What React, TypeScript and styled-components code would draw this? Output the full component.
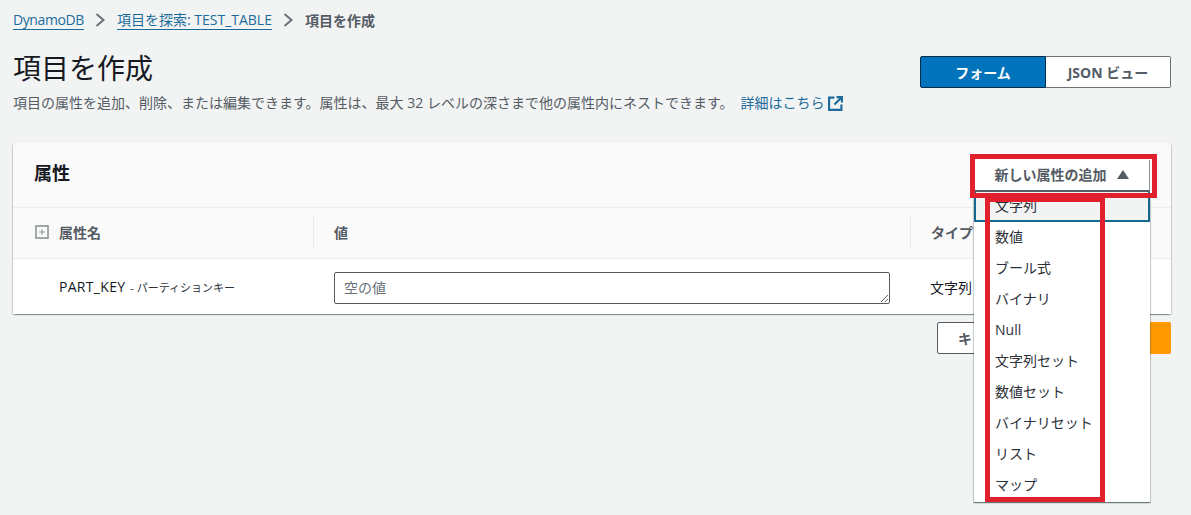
import React from "react";
import styled, { createGlobalStyle } from "styled-components";

const Global = createGlobalStyle`
  html, body { margin: 0; padding: 0; background: #f2f3f3; }
  body { font-family: "Open Sans", "Noto Sans CJK JP", sans-serif; color: #16191f; overflow: hidden; }
  * { box-sizing: border-box; }
`;

const Page = styled.div`
  width: 1191px;
  height: 515px;
  padding: 0 20px 0 13px;
  overflow: hidden;
`;
const Crumbs = styled.nav`
  display: flex;
  align-items: center;
  height: 20px;
  margin-top: 10px;
  font-size: 14px;
`;
const CrumbLink = styled.a<{ $tight?: boolean }>`
  color: #1b6c9c;
  border-bottom: 1px solid #1b6c9c;
  line-height: 18px;
  margin-top: 1px;
  letter-spacing: ${(p) => (p.$tight ? "-0.4px" : "0")};
`;
const CrumbCurrent = styled.span`
  color: #545b64;
  font-weight: 700;
`;
const Chevron = styled.svg`
  width: 10px;
  height: 14px;
  margin: 0 12px 0 11px;
  fill: none;
  stroke: #687078;
  stroke-width: 2;
`;
const HeaderRow = styled.header`
  display: flex;
  justify-content: space-between;
  align-items: flex-start;
  margin-top: 5px;
`;
const TitleBlock = styled.div`
  display: flex;
  flex-direction: column;
`;
const Title = styled.h1`
  margin: 13px 0 0;
  font-size: 28px;
  line-height: 40px;
  font-weight: 400;
  color: #16191f;
`;
const Description = styled.p`
  display: flex;
  align-items: center;
  margin: 5px 0 0;
  font-size: 14px;
  line-height: 20px;
  color: #545b64;
`;
const LearnMore = styled.a`
  display: inline-flex;
  align-items: center;
  gap: 4px;
  margin-left: 7px;
  color: #1b6c9c;
`;
const Toggle = styled.div`
  display: flex;
  width: 251px;
  height: 32px;
  margin-top: 21px;
`;
const ToggleButton = styled.button<{ $active?: boolean }>`
  width: ${(p) => (p.$active ? "126px" : "125px")};
  height: 32px;
  padding: 0;
  font: 700 14px "Open Sans", "Noto Sans CJK JP", sans-serif;
  color: ${(p) => (p.$active ? "#fff" : "#545b64")};
  background: ${(p) => (p.$active ? "#0073bb" : "#fff")};
  border: 1px solid ${(p) => (p.$active ? "#002b4d" : "#687078")};
  border-left-width: ${(p) => (p.$active ? "1px" : "0")};
  border-radius: ${(p) => (p.$active ? "2px 0 0 2px" : "0 2px 2px 0")};
`;
const Card = styled.section`
  margin-top: 30px;
  height: 171px;
  background: #fff;
  border-radius: 2px;
  box-shadow: 0 1px 1px 0 rgba(0, 28, 36, 0.3), 1px 1px 1px 0 rgba(0, 28, 36, 0.15), -1px 1px 1px 0 rgba(0, 28, 36, 0.15);
`;
const CardHeader = styled.div`
  display: flex;
  justify-content: space-between;
  height: 65px;
  padding: 17px 21px 0 21px;
  background: #fafafa;
  border-bottom: 1px solid #eaeded;
`;
const CardTitle = styled.h2`
  margin: 0;
  font-size: 18px;
  line-height: 26px;
  font-weight: 700;
  color: #16191f;
`;
const MenuAnchor = styled.div`
  position: relative;
  width: 176px;
  height: 32px;
`;
const AddButton = styled.button`
  display: flex;
  align-items: center;
  justify-content: center;
  gap: 10px;
  width: 176px;
  height: 32px;
  padding: 0 0 2px 0;
  font: 700 14px "Open Sans", "Noto Sans CJK JP", sans-serif;
  color: #545b64;
  background: #fff;
  border: 0;
  border-right: 1px solid #879596;
  border-bottom: 2px solid #545b64;
`;
const Caret = styled.svg`
  width: 12px;
  height: 9px;
  fill: #545b64;
`;
const Menu = styled.ul`
  position: absolute;
  z-index: 2;
  top: 32px;
  left: 0;
  width: 176px;
  height: 310px;
  margin: 0;
  padding: 0;
  list-style: none;
  background: #fff;
  box-shadow: 0 1px 1px 0 rgba(0, 28, 36, 0.4), 1px 1px 1px 0 rgba(0, 28, 36, 0.15), -1px 1px 1px 0 rgba(0, 28, 36, 0.15);
`;
const MenuItem = styled.li<{ $active?: boolean }>`
  display: flex;
  align-items: center;
  height: ${(p) => (p.$active ? "30px" : "31px")};
  padding: ${(p) => (p.$active ? "0 0 2px 19px" : "0 0 3px 21px")};
  font-size: 14px;
  color: #2b3138;
  background: ${(p) => (p.$active ? "#f2f3f3" : "transparent")};
  border: ${(p) => (p.$active ? "2px solid #16688f" : "0")};
  border-top: 0;
`;
const RedFrame = styled.div<{ $top: number; $left: number; $w: number; $h: number }>`
  position: absolute;
  z-index: 3;
  top: ${(p) => p.$top}px;
  left: ${(p) => p.$left}px;
  width: ${(p) => p.$w}px;
  height: ${(p) => p.$h}px;
  border: 5px solid #e0202c;
  pointer-events: none;
`;
const GridRow = styled.div<{ $head?: boolean }>`
  display: grid;
  grid-template-columns: 300px 597px 1fr;
  align-items: center;
  height: ${(p) => (p.$head ? "51px" : "55px")};
  padding-bottom: ${(p) => (p.$head ? "3px" : "0")};
  background: ${(p) => (p.$head ? "#fafafa" : "#fff")};
  border-bottom: ${(p) => (p.$head ? "1px solid #eaeded" : "0")};
`;
const HeadCell = styled.div<{ $divider?: boolean }>`
  display: flex;
  align-items: center;
  height: 32px;
  padding-left: 20px;
  font-size: 14px;
  font-weight: 700;
  color: #545b64;
  border-left: ${(p) => (p.$divider ? "1px solid #eaeded" : "0")};
`;
const NameHead = styled(HeadCell)`
  padding-left: 22px;
  gap: 10px;
`;
const Expand = styled.svg`
  width: 14px;
  height: 14px;
  fill: none;
  stroke: #879596;
`;
const NameCell = styled.div`
  display: flex;
  align-items: baseline;
  gap: 5px;
  padding-left: 46px;
  font-size: 14px;
  letter-spacing: 0.3px;
  color: #16191f;
`;
const KeyHint = styled.span`
  font-size: 11px;
  letter-spacing: 0;
  color: #2b3138;
`;
const ValueCell = styled.div`
  display: flex;
  padding: 2px 0 0 21px;
`;
const ValueInput = styled.textarea`
  display: block;
  width: 556px;
  height: 32px;
  padding: 4px 9px;
  font: 14px "Open Sans", "Noto Sans CJK JP", sans-serif;
  color: #16191f;
  background: #fff;
  border: 1px solid #545b64;
  border-radius: 2px;
  resize: both;
  &::placeholder { color: #687078; opacity: 1; }
`;
const TypeCell = styled.div`
  padding-left: 20px;
  font-size: 14px;
  color: #16191f;
`;
const Actions = styled.div`
  display: flex;
  justify-content: flex-end;
  margin-top: 8px;
`;
const CancelButton = styled.button`
  width: 150px;
  height: 32px;
  padding: 0;
  text-align: left;
  text-indent: 20px;
  font: 700 14px "Open Sans", "Noto Sans CJK JP", sans-serif;
  color: #545b64;
  background: #fff;
  border: 1px solid #545b64;
  border-radius: 2px;
`;
const PrimaryButton = styled.button`
  width: 84px;
  height: 32px;
  background: #ff9900;
  border: 0;
  border-radius: 2px;
`;

const items = ["文字列","数値","ブール式","バイナリ","Null","文字列セット","数値セット","バイナリセット","リスト","マップ"];

const Sep = () => (
  <Chevron viewBox="0 0 10 14"><path d="M1.5 1l7 6-7 6" /></Chevron>
);

export default function App() {
  return (
    <Page>
      <Global />
      <Crumbs>
        <CrumbLink $tight>DynamoDB</CrumbLink>
        <Sep />
        <CrumbLink>項目を探索: TEST_TABLE</CrumbLink>
        <Sep />
        <CrumbCurrent>項目を作成</CrumbCurrent>
      </Crumbs>
      <HeaderRow>
        <TitleBlock>
          <Title>項目を作成</Title>
          <Description>
            項目の属性を追加、削除、または編集できます。属性は、最大 32 レベルの深さまで他の属性内にネストできます。
            <LearnMore>
              詳細はこちら
              <svg width="15" height="15" viewBox="0 0 14 14" fill="none" stroke="#1b6c9c" strokeWidth="2">
                <path d="M6 1.5H1v11.5h11.5V8M8 1h5v5M13 1L6 8" />
              </svg>
            </LearnMore>
          </Description>
        </TitleBlock>
        <Toggle>
          <ToggleButton $active>フォーム</ToggleButton>
          <ToggleButton>JSON ビュー</ToggleButton>
        </Toggle>
      </HeaderRow>
      <Card>
        <CardHeader>
          <CardTitle>属性</CardTitle>
          <MenuAnchor>
            <AddButton>
              新しい属性の追加
              <Caret viewBox="0 0 12 9"><path d="M6 0l6 9H0z" /></Caret>
            </AddButton>
            <RedFrame $top={-6} $left={-4} $w={187} $h={44} />
            <Menu>
              {items.map((t, i) => (
                <MenuItem key={t} $active={i === 0}>{t}</MenuItem>
              ))}
            </Menu>
            <RedFrame $top={37} $left={11} $w={120} $h={305} />
          </MenuAnchor>
        </CardHeader>
        <GridRow $head>
          <NameHead>
            <Expand viewBox="0 0 14 14">
              <rect x="1" y="1" width="12" height="12" strokeWidth="1.6" />
              <path d="M4 7h6M7 4v6" />
            </Expand>
            属性名
          </NameHead>
          <HeadCell $divider>値</HeadCell>
          <HeadCell $divider>タイプ</HeadCell>
        </GridRow>
        <GridRow>
          <NameCell>PART_KEY <KeyHint>- パーティションキー</KeyHint></NameCell>
          <ValueCell><ValueInput placeholder="空の値" /></ValueCell>
          <TypeCell>文字列</TypeCell>
        </GridRow>
      </Card>
      <Actions>
        <CancelButton>キャンセル</CancelButton>
        <PrimaryButton />
      </Actions>
    </Page>
  );
}
